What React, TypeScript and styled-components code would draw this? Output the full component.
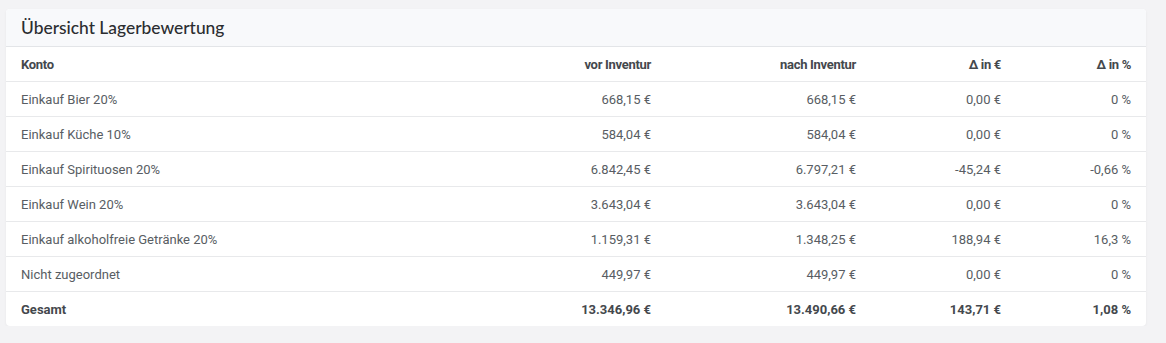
import React from 'react';
import styled, { createGlobalStyle } from 'styled-components';

const GlobalStyle = createGlobalStyle`
  html, body {
    margin: 0;
    background: #f3f3f5;
  }
  body {
    padding: 9px 20px 0 6px;
    font-family: Roboto, 'Liberation Sans', sans-serif;
  }
`;

const Card = styled.div`
  background: #fff;
  border-radius: 4px;
  box-shadow: 0 1px 3px rgba(0, 0, 0, 0.05);
  overflow: hidden;
  width: 1140px;
`;

const CardHeader = styled.div`
  background: #f8f9fb;
  border-bottom: 1px solid #e3e5e8;
  height: 37px;
  display: flex;
  align-items: center;
  padding: 0 15px;
`;

const Title = styled.h3`
  margin: 0;
  font-family: Lato, 'Open Sans', sans-serif;
  font-size: 17.4px;
  font-weight: 500;
  color: #2b2d30;
`;

const Table = styled.table`
  width: 100%;
  border-collapse: collapse;
  table-layout: fixed;
  font-size: 13px;
  color: #555a60;
`;

const Cell = styled.td<{ $align?: 'left' | 'right'; $bold?: boolean }>`
  height: 34px;
  padding: 0 15px;
  text-align: ${(p) => p.$align ?? 'left'};
  font-weight: ${(p) => (p.$bold ? 700 : 400)};
  color: ${(p) => (p.$bold ? '#44484d' : '#585d63')};
  border-top: 1px solid #e8e9eb;
  white-space: nowrap;
`;

const HeadCell = styled.th<{ $align?: 'left' | 'right' }>`
  height: 34px;
  padding: 0 15px;
  text-align: ${(p) => p.$align ?? 'left'};
  font-weight: 700;
  color: #44484d;
  font-size: 13px;
  letter-spacing: -0.3px;
`;

type Row = [string, string, string, string, string];

const rows: Row[] = [
  ['Einkauf Bier 20%', '668,15 €', '668,15 €', '0,00 €', '0 %'],
  ['Einkauf Küche 10%', '584,04 €', '584,04 €', '0,00 €', '0 %'],
  ['Einkauf Spirituosen 20%', '6.842,45 €', '6.797,21 €', '-45,24 €', '-0,66 %'],
  ['Einkauf Wein 20%', '3.643,04 €', '3.643,04 €', '0,00 €', '0 %'],
  ['Einkauf alkoholfreie Getränke 20%', '1.159,31 €', '1.348,25 €', '188,94 €', '16,3 %'],
  ['Nicht zugeordnet', '449,97 €', '449,97 €', '0,00 €', '0 %'],
];

const total: Row = ['Gesamt', '13.346,96 €', '13.490,66 €', '143,71 €', '1,08 %'];

const widths = [455, 205, 205, 145, 130];

const DataRow = ({ row, bold }: { row: Row; bold?: boolean }) => (
  <tr>
    {row.map((v, i) => (
      <Cell key={i} $align={i === 0 ? 'left' : 'right'} $bold={bold}>
        {v}
      </Cell>
    ))}
  </tr>
);

export default function App() {
  return (
    <>
      <GlobalStyle />
      <Card>
        <CardHeader>
          <Title>Übersicht Lagerbewertung</Title>
        </CardHeader>
        <Table>
          <colgroup>
            {widths.map((w, i) => (
              <col key={i} style={{ width: w }} />
            ))}
          </colgroup>
          <thead>
            <tr>
              <HeadCell>Konto</HeadCell>
              <HeadCell $align="right">vor Inventur</HeadCell>
              <HeadCell $align="right">nach Inventur</HeadCell>
              <HeadCell $align="right">Δ in €</HeadCell>
              <HeadCell $align="right">Δ in %</HeadCell>
            </tr>
          </thead>
          <tbody>
            {rows.map((r) => (
              <DataRow key={r[0]} row={r} />
            ))}
            <DataRow row={total} bold />
          </tbody>
        </Table>
      </Card>
    </>
  );
}
